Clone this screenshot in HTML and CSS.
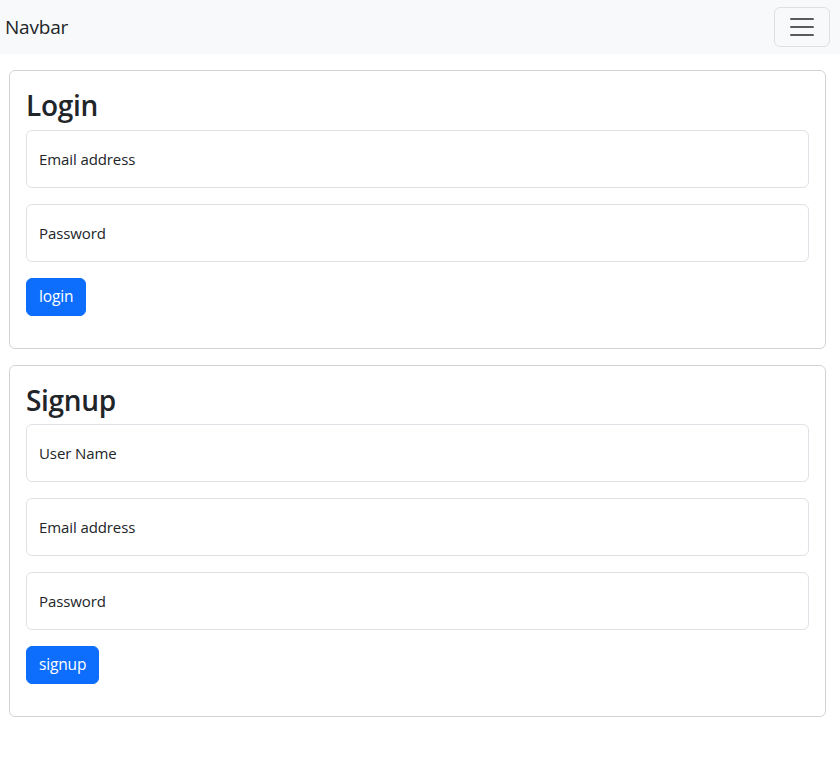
FILE: index.html
```html
<!DOCTYPE html>
<html lang="en">
<head>
<meta charset="utf-8">
<title>Login</title>
<link rel="stylesheet" href="styles.css">
</head>
<body>
<nav class="navbar">
  <a class="brand" href="#">Navbar</a>
  <button class="toggler" type="button" aria-label="Toggle navigation">
    <svg width="30" height="30" viewBox="0 0 30 30"><path stroke="rgba(33,37,41,0.75)" stroke-linecap="round" stroke-miterlimit="10" stroke-width="2" d="M4 7h22M4 15h22M4 23h22"/></svg>
  </button>
</nav>
<main class="main">
  <section class="card">
    <h2 class="title">Login</h2>
    <form class="form">
      <input class="field" type="email" placeholder="Email address">
      <input class="field" type="password" placeholder="Password">
      <button class="btn" type="button">login</button>
    </form>
  </section>
  <section class="card">
    <h2 class="title">Signup</h2>
    <form class="form">
      <input class="field" type="text" placeholder="User Name">
      <input class="field" type="email" placeholder="Email address">
      <input class="field" type="password" placeholder="Password">
      <button class="btn" type="button">signup</button>
    </form>
  </section>
</main>
</body>
</html>
```

FILE: styles.css
```css
* { box-sizing: border-box; }
body {
  margin: 0;
  font-family: "Open Sans", "Noto Sans", "Liberation Sans", sans-serif;
  font-size: 16px;
  line-height: 1.5;
  color: #212529;
  background: #fff;
}
.navbar {
  height: 54px;
  background: #f8f9fa;
  display: flex;
  align-items: center;
  justify-content: space-between;
  padding: 0 10px 0 5px;
}
.brand {
  font-size: 19px;
  color: #212529;
  text-decoration: none;
  letter-spacing: -0.2px;
}
.toggler {
  width: 56px;
  height: 40px;
  padding: 0;
  display: flex;
  align-items: center;
  justify-content: center;
  background: transparent;
  border: 1px solid rgba(0,0,0,0.1);
  border-radius: 6px;
}
.main {
  padding: 16px 14px 0 9px;
  display: flex;
  flex-direction: column;
  gap: 16px;
}
.card {
  border: 1px solid rgba(0,0,0,0.176);
  border-radius: 6px;
  padding: 16px 16px 32px;
}
.title {
  margin: 0 0 8px;
  height: 34.5px;
  font-size: 28px;
  font-weight: 600;
  line-height: 37px;
  letter-spacing: -0.3px;
}
.form {
  display: flex;
  flex-direction: column;
  align-items: flex-start;
  gap: 16px;
}
.field {
  width: 100%;
  height: 58px;
  padding: 0 12px;
  border: 1px solid #dee2e6;
  border-radius: 6px;
  font: inherit;
  font-size: 15px;
  letter-spacing: -0.1px;
  color: #212529;
}
.field::placeholder { color: #212529; opacity: 1; }
.btn {
  height: 38px;
  padding: 0 12px;
  border: 1px solid #0d6efd;
  background: #0d6efd;
  color: #fff;
  border-radius: 6px;
  font: inherit;
  font-size: 15.5px;
  letter-spacing: -0.15px;
}
```
